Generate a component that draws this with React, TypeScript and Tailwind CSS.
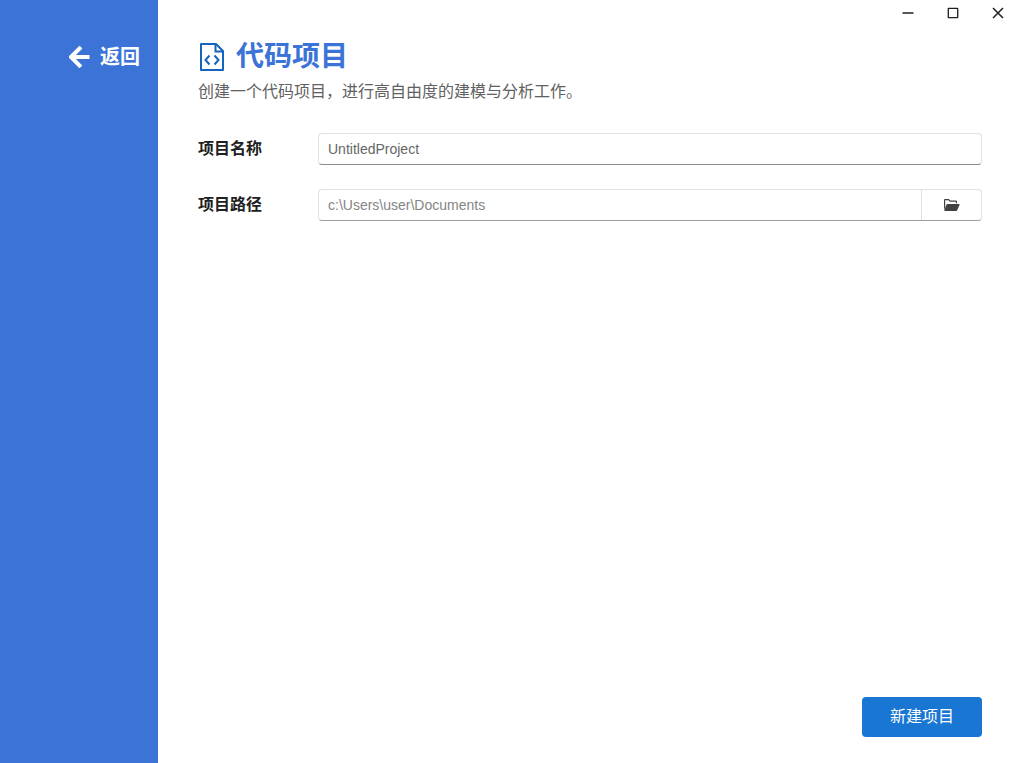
import React, { useState } from 'react'

function BackIcon() {
  return (
    <svg className="h-[22px] w-6" viewBox="0 0 24 22" fill="none" stroke="currentColor" strokeWidth="4" aria-hidden="true">
      <path d="M23.500 11H5" />
      <path d="M13.500 2.500 5 11l8.500 8.500" strokeLinejoin="round" strokeLinecap="square" />
    </svg>
  )
}

function CodeFileIcon() {
  return (
    <svg className="h-7 w-6 text-[#1565c0]" viewBox="0 0 24 28" fill="none" stroke="currentColor" strokeWidth="2" aria-hidden="true">
      <path d="M1 1h15l7 7v19H1z" strokeLinejoin="round" />
      <path d="M15.500 1v7.500H23" />
      <path d="M9.500 12.500 5.500 17l4 4.500M14.500 12.500l4 4.500-4 4.500" />
    </svg>
  )
}

function FolderOpenIcon() {
  return (
    <svg className="h-3 w-4" viewBox="0 0 16 12" fill="currentColor" aria-hidden="true">
      <path d="M0 1.200C0 .5.500 0 1.200 0h3.600l1.600 1.500h5.400c.7 0 1.200.5 1.200 1.200V4.200h-1.200V2.700H6L4.400 1.200H1.200V8L0 11z" />
      <path d="M3.400 5h11.500c.5 0 .8.400.6.900l-2.300 5.400c-.2.500-.6.700-1.100.7H.9c-.5 0-.8-.4-.6-.9L2.600 5.600c.1-.4.400-.6.800-.6z" />
    </svg>
  )
}

function WindowControls() {
  const buttonClass = 'flex h-[26px] w-[45px] items-center justify-center text-[#1f1f1f] hover:bg-gray-100'

  return (
    <div className="flex justify-end">
      <button type="button" aria-label="最小化" className={buttonClass}>
        <svg className="h-3 w-3" viewBox="0 0 12 12" fill="none" stroke="currentColor" strokeWidth="1.500">
          <path d="M.5 6h11" />
        </svg>
      </button>
      <button type="button" aria-label="最大化" className={buttonClass}>
        <svg className="h-3 w-3" viewBox="0 0 12 12" fill="none" stroke="currentColor" strokeWidth="1.300">
          <rect x="1.300" y="1.300" width="9.400" height="9.400" rx=".4" />
        </svg>
      </button>
      <button type="button" aria-label="关闭" className={buttonClass}>
        <svg className="h-3 w-3" viewBox="0 0 12 12" fill="none" stroke="currentColor" strokeWidth="1.500">
          <path d="M1 1l10 10M11 1 1 11" />
        </svg>
      </button>
    </div>
  )
}

export default function App() {
  const [projectName, setProjectName] = useState('UntitledProject')
  const [projectPath, setProjectPath] = useState('c:\\Users\\user\\Documents')

  return (
    <div className="flex min-h-screen bg-white font-['Liberation_Sans','Noto_Sans_CJK_SC',sans-serif] text-base text-[#212121]">
      {/* Sidebar */}
      <aside className="w-[158px] shrink-0 bg-[#3c73d6] pt-[42px] pr-[18px]">
        <button type="button" className="ml-auto flex items-center gap-[10px] text-xl leading-[30px] font-bold text-white">
          <BackIcon />
          返回
        </button>
      </aside>

      <div className="flex min-w-0 flex-1 flex-col">
        <WindowControls />

        <main className="flex flex-1 flex-col px-10 pt-3 pr-[38px] pb-[26px]">
          <header>
            <h1 className="flex items-center gap-3 pl-[2px] text-[28px] leading-[38px] font-bold text-[#3c73d6]">
              <CodeFileIcon />
              代码项目
            </h1>
            <p className="mt-1 leading-6 text-[#616161]">创建一个代码项目，进行高自由度的建模与分析工作。</p>
          </header>

          {/* Project settings */}
          <form id="project-form" className="mt-[29px] flex flex-col gap-6" onSubmit={(e) => e.preventDefault()}>
            <div className="flex items-center">
              <label htmlFor="project-name" className="w-[120px] shrink-0 font-bold">项目名称</label>
              <input
                id="project-name"
                type="text"
                value={projectName}
                onChange={(e) => setProjectName(e.target.value)}
                className="h-8 min-w-0 flex-1 rounded border border-[#e0e0e0] border-b-[#8c8c8c] px-[9px] text-sm text-[#666666] outline-none"
              />
            </div>

            <div className="flex items-center">
              <label htmlFor="project-path" className="w-[120px] shrink-0 font-bold">项目路径</label>
              <div className="flex h-8 min-w-0 flex-1 rounded border border-[#e0e0e0] border-b-[#9e9e9e]">
                <input
                  id="project-path"
                  type="text"
                  value={projectPath}
                  onChange={(e) => setProjectPath(e.target.value)}
                  className="min-w-0 flex-1 px-[9px] text-sm text-[#858585] outline-none"
                />
                <button
                  type="button"
                  aria-label="选择文件夹"
                  className="flex w-[60px] items-center justify-center border-l border-[#e0e0e0] text-[#424242]"
                >
                  <FolderOpenIcon />
                </button>
              </div>
            </div>
          </form>

          <footer className="mt-auto flex justify-end">
            <button type="submit" form="project-form" className="h-10 w-[120px] rounded bg-[#1976d2] text-white">
              新建项目
            </button>
          </footer>
        </main>
      </div>
    </div>
  )
}
